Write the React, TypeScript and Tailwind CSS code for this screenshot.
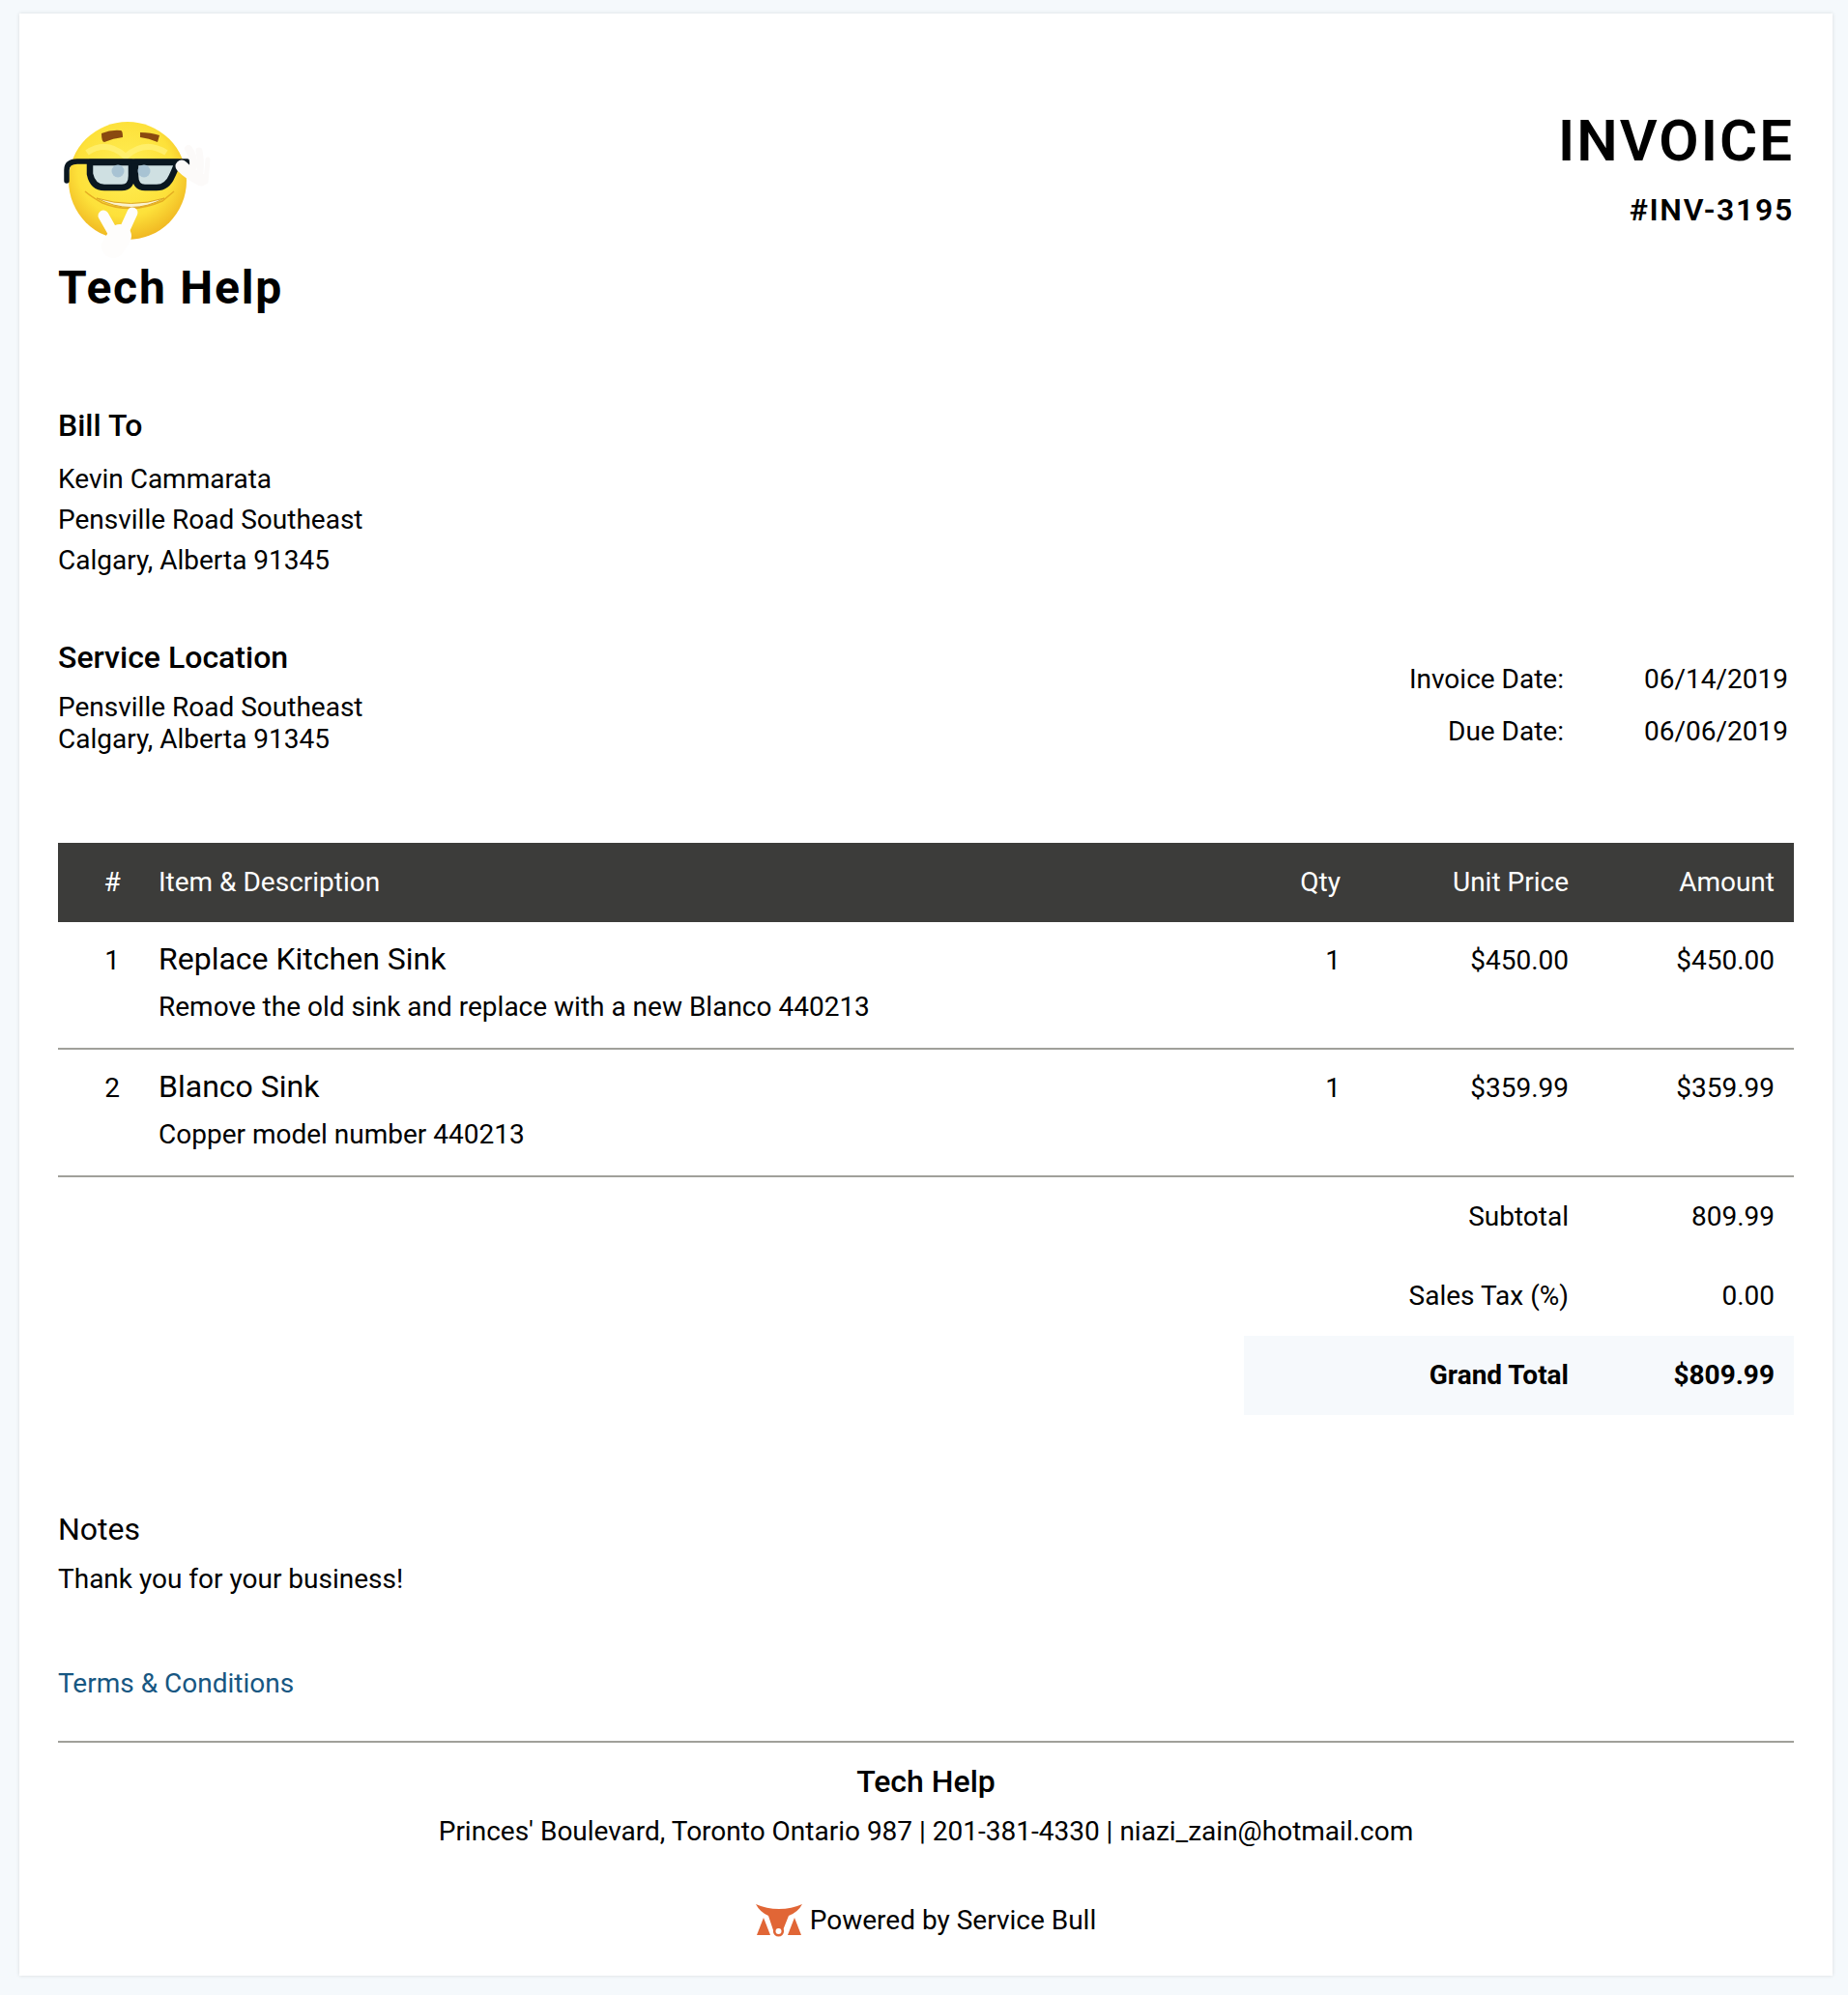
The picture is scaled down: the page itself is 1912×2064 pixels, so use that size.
import React from 'react';

const font = "font-['Roboto',sans-serif]";

const EmojiLogo = () => (
  <svg width="160" height="148" viewBox="0 0 160 148" className="block">
    <defs>
      <radialGradient id="face" cx="0.48" cy="0.4" r="0.62">
        <stop offset="0" stopColor="#ffee55" />
        <stop offset="0.65" stopColor="#fde13a" />
        <stop offset="1" stopColor="#efb420" />
      </radialGradient>
    </defs>
    <circle cx="72" cy="67" r="61" fill="url(#face)" />
    <path d="M30 38 Q50 24 70 42 Q90 24 112 38" fill="none" stroke="#fff27a" strokeWidth="6" opacity="0.7" />
    <path d="M45 18 Q55 14 65 15 Q67 15 67 22 Q57 23 48 27 Q45 27 45 18 Z" fill="#8a4a10" />
    <path d="M85 17 Q96 17 105 20 L103 27 Q94 23 85 22 Z" fill="#8a4a10" />
    <path d="M28 78 Q35 84 46 90 Q76 102 108 88 L120 78" fill="none" stroke="#e5ad22" strokeWidth="1.5" />
    <path d="M40 85 Q76 104 110 85 Q76 96 40 85 Z" fill="#fbf3cf" stroke="#dca626" strokeWidth="1" />
    <path d="M33 48 H76 V62 Q76 74 66 74 H48 Q36 74 33 60 Z" fill="#cfe0e2" stroke="#0a1720" strokeWidth="6.5" strokeLinejoin="round" />
    <path d="M80 48 H124 Q120 58 118 62 Q113 74 102 74 H90 Q80 74 80 62 Z" fill="#cfe0e2" stroke="#0a1720" strokeWidth="6.5" strokeLinejoin="round" />
    <circle cx="62" cy="57" r="6.5" fill="#a8c3d3" />
    <circle cx="89" cy="57" r="6.5" fill="#a8c3d3" />
    <path d="M9 67 V56 Q9 47 20 47 H134 L136 51" fill="none" stroke="#0a1720" strokeWidth="5.5" strokeLinecap="round" strokeLinejoin="round" />
    <g fill="none" stroke="#fcfaf9" strokeLinecap="round">
      <path d="M128 52 Q136 60 148 66" strokeWidth="13" />
      <path d="M135 34 Q141 42 140 52" strokeWidth="8" />
      <path d="M146 36 Q148 46 147 58" strokeWidth="7" />
      <path d="M155 45 L153 68" strokeWidth="5" />
    </g>
    <g fill="none" stroke="#fefdfc" strokeLinecap="round">
      <path d="M47 103 L60 126" strokeWidth="11" />
      <path d="M77 100 L66 124" strokeWidth="11" />
      <path d="M64 124 L57 135" strokeWidth="24" />
    </g>
  </svg>
);

const BullLogo = () => (
  <svg width="48" height="34" viewBox="0 0 48 34" className="block">
    <g fill="#e16636">
      <path d="M0 0 Q11 5 24 5 Q37 5 48 0 Q44 8 34 12 L28 27 H18 L13 12 Q4 8 0 0 Z" />
      <path d="M8 14 L1 32 H15 Z" />
      <path d="M40 14 L33 32 H47 Z" />
      <circle cx="23.5" cy="28" r="5.6" />
    </g>
    <circle cx="23.5" cy="28" r="3" fill="#fff" />
  </svg>
);

const columns = 'grid grid-cols-[104px_1123px_120px_236px_213px]';

const items = [
  { n: '1', name: 'Replace Kitchen Sink', desc: 'Remove the old sink and replace with a new Blanco 440213', qty: '1', price: '$450.00', amount: '$450.00' },
  { n: '2', name: 'Blanco Sink', desc: 'Copper model number 440213', qty: '1', price: '$359.99', amount: '$359.99' },
];

const App = () => {
  return (
    <div className={`min-h-[2064px] bg-[#f5f9fc] px-5 pt-[14px] text-black text-[28px] ${font}`}>
      <div className="h-[2030px] w-[1876px] bg-white px-10 pt-[106px] shadow-[0_0_4px_rgba(0,0,0,0.12)]">
        {/* Header */}
        <div className="flex items-start justify-between">
          <div>
            <EmojiLogo />
            <h2 className="mt-[3px] text-[48px] leading-[54px] font-bold tracking-[1.8px]">Tech Help</h2>
          </div>
          <div className="-mt-[9px] text-right">
            <h1 className="text-[60px] leading-[70px] font-semibold tracking-[2px]">INVOICE</h1>
            <div className="mt-[17px] text-[32px] leading-[38px] font-semibold tracking-[1.7px]">#INV-3195</div>
          </div>
        </div>

        {/* Bill to */}
        <div className="mt-[97px]">
          <h3 className="text-[32px] leading-[36px] font-medium">Bill To</h3>
          <div className="mt-[17px] leading-[42px]">
            <div>Kevin Cammarata</div>
            <div>Pensville Road Southeast</div>
            <div>Calgary, Alberta 91345</div>
          </div>
        </div>

        {/* Service location and dates */}
        <div className="mt-[61px] flex items-start justify-between">
          <div>
            <h3 className="text-[32px] leading-[36px] font-medium">Service Location</h3>
            <div className="mt-[17px] leading-[33px]">
              <div>Pensville Road Southeast</div>
              <div>Calgary, Alberta 91345</div>
            </div>
          </div>
          <div className="mt-[24px] grid grid-cols-[auto_232px] gap-y-[20px] pr-[6px] text-right leading-[34px]">
            <div>Invoice Date:</div>
            <div>06/14/2019</div>
            <div>Due Date:</div>
            <div>06/06/2019</div>
          </div>
        </div>

        {/* Items */}
        <div className={`${columns} mt-[91px] h-[82px] items-center bg-[#3c3c3a] text-white`}>
          <div className="pl-2 text-center">#</div>
          <div>Item &amp; Description</div>
          <div className="pr-5 text-right">Qty</div>
          <div className="pr-5 text-right">Unit Price</div>
          <div className="pr-5 text-right">Amount</div>
        </div>
        {items.map((item) => (
          <div key={item.n} className={`${columns} h-[132px] border-b-2 border-[#a0a09a] pt-5`}>
            <div className="pl-2 pt-[2px] text-center leading-[36px]">{item.n}</div>
            <div>
              <div className="text-[32px] leading-[36px]">{item.name}</div>
              <div className="mt-[14px] leading-[36px]">{item.desc}</div>
            </div>
            <div className="pr-5 pt-[2px] text-right leading-[36px]">{item.qty}</div>
            <div className="pr-5 pt-[2px] text-right leading-[36px]">{item.price}</div>
            <div className="pr-5 pt-[2px] text-right leading-[36px]">{item.amount}</div>
          </div>
        ))}

        {/* Totals */}
        <div className="ml-auto w-[569px]">
          <div className="grid h-[82px] grid-cols-[356px_213px] items-center text-right">
            <div className="pr-5">Subtotal</div>
            <div className="pr-5">809.99</div>
          </div>
          <div className="grid h-[82px] grid-cols-[356px_213px] items-center text-right">
            <div className="pr-5">Sales Tax (%)</div>
            <div className="pr-5">0.00</div>
          </div>
          <div className="grid h-[82px] grid-cols-[356px_213px] items-center bg-[#f6f9fc] text-right font-bold">
            <div className="pr-5">Grand Total</div>
            <div className="pr-5">$809.99</div>
          </div>
        </div>

        {/* Notes */}
        <div className="mt-[100px] text-[32px] leading-[36px]">Notes</div>
        <div className="mt-[16px] leading-[36px]">Thank you for your business!</div>
        <div className="mt-[72px] leading-[36px] text-[#175782]">Terms &amp; Conditions</div>

        {/* Footer */}
        <div className="mt-[41px] border-t-2 border-[#a0a09a] pt-[22px] text-center">
          <div className="text-[32px] leading-[36px] font-medium">Tech Help</div>
          <div className="mt-[16px] leading-[36px]">Princes' Boulevard, Toronto Ontario 987 | 201-381-4330 | niazi_zain@hotmail.com</div>
          <div className="mt-[56px] flex items-center justify-center gap-2 leading-[36px]">
            <BullLogo />
            <span>Powered by Service Bull</span>
          </div>
        </div>
      </div>
    </div>
  );
};

export default App;
